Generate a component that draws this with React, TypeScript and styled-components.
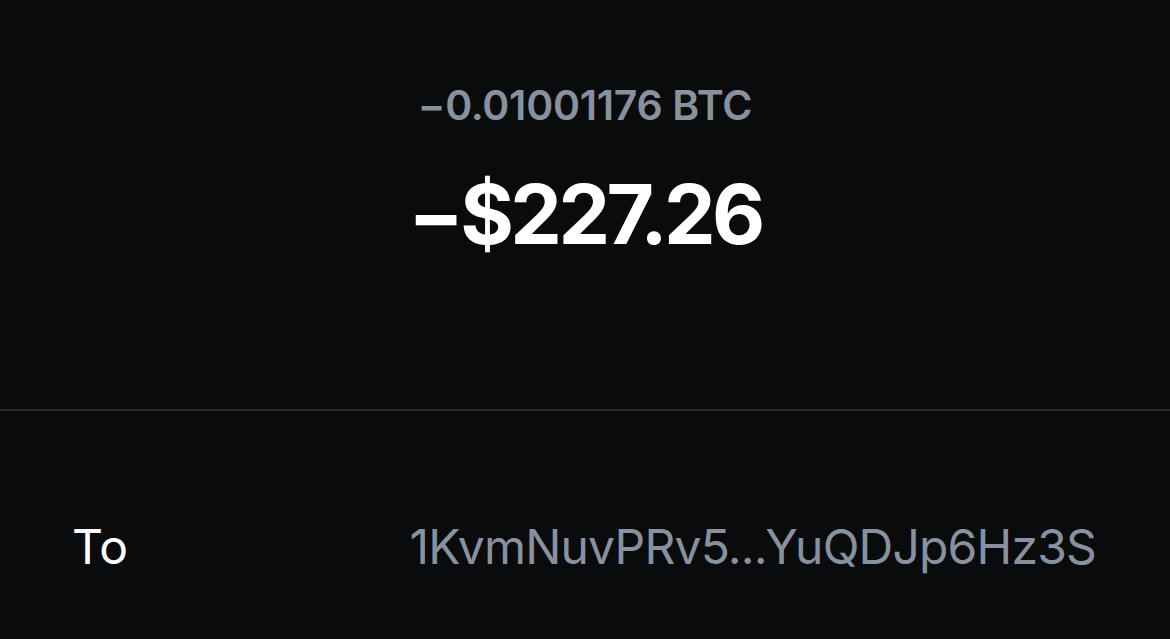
import React from 'react';
import styled, { createGlobalStyle } from 'styled-components';

const GlobalStyle = createGlobalStyle`
  html, body {
    margin: 0;
    padding: 0;
    background: #0a0b0d;
  }
  body {
    font-family: Inter, "Noto Sans", "Liberation Sans", sans-serif;
    -webkit-font-smoothing: antialiased;
  }
`;

const Screen = styled.div`
  width: 1170px;
  height: 639px;
  background: #0a0b0d;
  display: flex;
  flex-direction: column;
  overflow: hidden;
`;

const Summary = styled.section`
  flex: 0 0 411px;
  display: flex;
  flex-direction: column;
  align-items: center;
  padding-top: 78px;
  box-sizing: border-box;
  border-bottom: 2px solid #2a2b2f;
`;

const CryptoAmount = styled.div`
  font-size: 41px;
  font-weight: 600;
  color: #8a919e;
  letter-spacing: -0.3px;
  line-height: 54px;
`;

const FiatAmount = styled.div`
  margin-top: 33px;
  font-size: 82px;
  font-weight: 700;
  color: #ffffff;
  letter-spacing: -3.6px;
  line-height: 100px;
`;

const DetailRow = styled.div`
  flex: 1;
  display: flex;
  align-items: center;
  justify-content: space-between;
  padding: 42px 74px 0 72px;
`;

const Label = styled.span`
  font-size: 48px;
  font-weight: 400;
  color: #ffffff;
`;

const Value = styled.span<{ $muted?: boolean }>`
  font-size: 48px;
  font-weight: 400;
  color: ${p => (p.$muted ? '#8a919e' : '#ffffff')};
  letter-spacing: -0.8px;
`;

const App: React.FC = () => (
  <Screen>
    <GlobalStyle />
    <Summary>
      <CryptoAmount>−0.01001176 BTC</CryptoAmount>
      <FiatAmount>−$227.26</FiatAmount>
    </Summary>
    <DetailRow>
      <Label>To</Label>
      <Value $muted>1KvmNuvPRv5...YuQDJp6Hz3S</Value>
    </DetailRow>
  </Screen>
);

export default App;
